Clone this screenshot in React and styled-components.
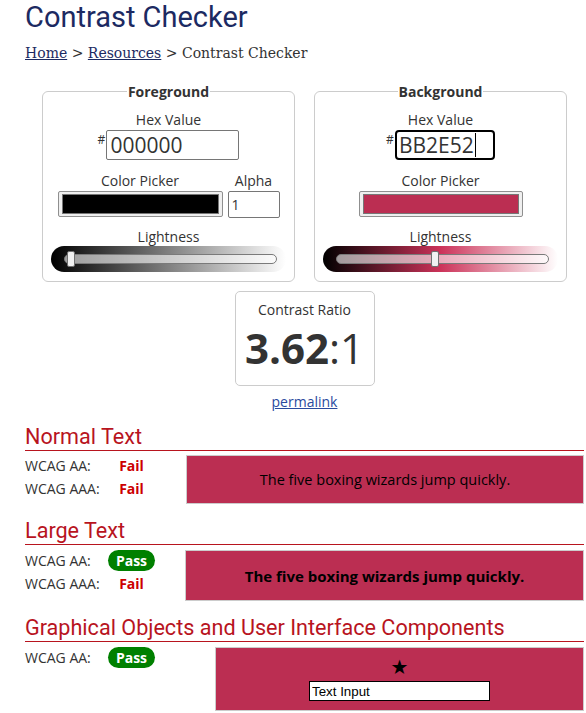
import React from "react";
import styled, { createGlobalStyle, css } from "styled-components";

const GlobalStyle = createGlobalStyle`
  html, body { margin: 0; padding: 0; background: #fff; }
  body {
    font-family: "Open Sans", "Noto Sans", sans-serif;
    color: #333;
    font-size: 14px;
    overflow: hidden;
  }
`;

const Page = styled.main`
  padding: 0 2px 0 25px;
`;

const Title = styled.h1`
  margin: 0;
  font-family: Roboto, "Liberation Sans", sans-serif;
  font-weight: 400;
  font-size: 29px;
  line-height: 35px;
  color: #1c2a62;
`;

const Breadcrumb = styled.nav`
  margin-top: 8px;
  font-family: "DejaVu Serif", "Liberation Serif", serif;
  font-size: 14px;
  line-height: 20px;
  color: #333;
`;

const Crumb = styled.a`
  color: #1c2a62;
  text-decoration: underline;
`;

const PickerRow = styled.div`
  display: flex;
  justify-content: center;
  gap: 19px;
  margin-top: 19px;
`;

const Panel = styled.fieldset`
  box-sizing: border-box;
  width: 253px;
  margin: 0;
  padding: 9px 8px 9px;
  border: 1px solid #ccc;
  border-radius: 6px;
  display: flex;
  flex-direction: column;
  align-items: center;
  min-width: 0;
`;

const Legend = styled.legend`
  margin: 0 auto;
  padding: 0 1px;
  font-weight: 700;
  font-size: 14px;
  line-height: 19px;
  color: #333;
`;

const FieldLabel = styled.label`
  display: block;
  font-size: 14px;
  line-height: ${(p) => p.$lh || 20}px;
  text-align: center;
  color: #333;
  margin-top: ${(p) => p.$mt || 0}px;
`;

const HexRow = styled.div`
  display: flex;
  align-items: flex-start;
`;

const Hash = styled.span`
  font-size: 12px;
  line-height: 12px;
  margin-top: 4px;
  margin-right: 1px;
  color: #333;
`;

const HexBox = styled.div`
  box-sizing: border-box;
  width: ${(p) => p.$w}px;
  height: 30px;
  padding-left: 3px;
  display: flex;
  align-items: center;
  font-size: 21px;
  color: #333;
  background: #fff;
  ${(p) =>
    p.$focused
      ? css`
          border: 2px solid #000;
          border-radius: 4px;
          padding-left: 2px;
        `
      : css`
          border: 1px solid #767676;
          border-radius: 2px;
        `}
`;

const Caret = styled.span`
  display: inline-block;
  width: 1px;
  height: 24px;
  margin-left: 1px;
  background: #000;
`;

const SwatchRow = styled.div`
  display: flex;
  gap: 5px;
  margin-top: 11px;
`;

const SwatchCol = styled.div`
  display: flex;
  flex-direction: column;
  align-items: center;
`;

const Swatch = styled.div`
  box-sizing: border-box;
  width: ${(p) => p.$w}px;
  height: 26px;
  padding: 2px 3px;
  border: 1px solid #8f8f8f;
  border-radius: 2px;
  background: #efefef;
`;

const SwatchFill = styled.div`
  width: 100%;
  height: 100%;
  box-sizing: border-box;
  border: 1px solid #777;
  background: ${(p) => p.$color};
`;

const AlphaBox = styled.div`
  box-sizing: border-box;
  width: 52px;
  height: 27px;
  border: 1px solid #767676;
  border-radius: 2px;
  padding-left: 3px;
  display: flex;
  align-items: center;
  font-size: 14px;
  color: #333;
`;

const LightnessBar = styled.div`
  box-sizing: border-box;
  width: 235px;
  height: 26px;
  border-radius: 13px;
  padding: 0 9px 0 13px;
  display: flex;
  align-items: center;
  background: ${(p) => p.$gradient};
`;

const Track = styled.div`
  position: relative;
  flex: 1;
  height: 10px;
  box-sizing: border-box;
  border: 1px solid #7a7a7a;
  border-radius: 5px;
  background: rgba(255, 255, 255, 0.6);
`;

const Thumb = styled.div`
  position: absolute;
  top: 50%;
  width: 8px;
  height: 16px;
  box-sizing: border-box;
  transform: translateY(-50%);
  border: 1px solid #6f6f6f;
  border-radius: 2px;
  background: #f1f1f1;
`;

const ContrastBox = styled.div`
  box-sizing: border-box;
  width: 140px;
  margin: 9px auto 0;
  padding: 9px 0 8px;
  border: 1px solid #ccc;
  border-radius: 5px;
  text-align: center;
`;

const RatioLabel = styled.div`
  font-size: 14px;
  line-height: 18px;
  color: #333;
`;

const RatioValue = styled.div`
  font-size: 42px;
  line-height: 58px;
  color: #333;
  font-weight: 400;
`;

const RatioStrong = styled.span`
  font-weight: 700;
`;

const Permalink = styled.a`
  display: block;
  width: max-content;
  margin: 6px auto 0;
  font-size: 14px;
  line-height: 20px;
  color: #2a4a9e;
  text-decoration: underline;
`;

const SectionTitle = styled.h2`
  margin: ${(p) => p.$mt}px 0 0;
  font-family: Roboto, "Liberation Sans", sans-serif;
  font-weight: 400;
  font-size: 21.6px;
  line-height: 26px;
  color: #b8141e;
  border-bottom: 1px solid #b8141e;
`;

const ResultRow = styled.div`
  display: flex;
  align-items: flex-start;
  margin-top: ${(p) => p.$mt}px;
`;

const ResultTable = styled.div`
  width: ${(p) => p.$w}px;
  flex: none;
  display: grid;
  grid-template-columns: 78px 57px;
  grid-auto-rows: 23px;
  align-items: center;
  margin-top: -1px;
`;

const RowLabel = styled.span`
  font-size: 14px;
  line-height: 23px;
  color: #333;
`;

const Verdict = styled.span`
  justify-self: center;
  font-size: 14px;
  font-weight: 700;
  ${(p) =>
    p.$pass
      ? css`
          color: #fff;
          background: #008000;
          border-radius: 11px;
          padding: 0 8px;
          line-height: 21px;
        `
      : css`
          color: #cc0000;
          line-height: 23px;
        `}
`;

const SampleBox = styled.div`
  flex: 1;
  box-sizing: border-box;
  height: ${(p) => p.$h}px;
  border: 1px solid #ccc;
  background: #bb2e52;
  display: flex;
  flex-direction: column;
  align-items: center;
  justify-content: center;
  color: #000;
  font-size: ${(p) => (p.$large ? 15 : 14.5)}px;
  font-weight: ${(p) => (p.$large ? 700 : 400)};
`;

const Star = styled.span`
  font-family: "DejaVu Sans", sans-serif;
  font-size: 20px;
  line-height: 20px;
  color: #000;
`;

const TextInput = styled.input`
  box-sizing: border-box;
  width: 181px;
  height: 20px;
  margin-top: 4px;
  padding: 0 2px;
  border: 1px solid #000;
  background: #fff;
  color: #000;
  font-family: "Liberation Sans", Arial, sans-serif;
  font-size: 13.33px;
  outline: none;
`;

function thumbLeft(l) {
  return 2 + l * 201;
}

function Lightness({ gradient, value }) {
  return (
    <LightnessBar $gradient={gradient}>
      <Track>
        <Thumb style={{ left: thumbLeft(value) }} />
      </Track>
    </LightnessBar>
  );
}

export default function App() {
  return (
    <>
      <GlobalStyle />
      <Page>
        <Title>Contrast Checker</Title>
        <Breadcrumb>
          <Crumb href="#">Home</Crumb> &gt; <Crumb href="#">Resources</Crumb> &gt; Contrast Checker
        </Breadcrumb>

        <PickerRow>
          <Panel>
            <Legend>Foreground</Legend>
            <FieldLabel>Hex Value</FieldLabel>
            <HexRow>
              <Hash>#</Hash>
              <HexBox $w={133}>000000</HexBox>
            </HexRow>
            <SwatchRow>
              <SwatchCol>
                <FieldLabel>Color Picker</FieldLabel>
                <Swatch $w={165}>
                  <SwatchFill $color="#000000" />
                </Swatch>
              </SwatchCol>
              <SwatchCol>
                <FieldLabel>Alpha</FieldLabel>
                <AlphaBox>1</AlphaBox>
              </SwatchCol>
            </SwatchRow>
            <FieldLabel $mt={9} $lh={19}>Lightness</FieldLabel>
            <Lightness gradient="linear-gradient(to right, #000 0%, #808080 50%, #fff 100%)" value={0} />
          </Panel>

          <Panel>
            <Legend>Background</Legend>
            <FieldLabel>Hex Value</FieldLabel>
            <HexRow>
              <Hash>#</Hash>
              <HexBox $w={100} $focused>
                BB2E52
                <Caret />
              </HexBox>
            </HexRow>
            <SwatchRow>
              <SwatchCol>
                <FieldLabel>Color Picker</FieldLabel>
                <Swatch $w={164}>
                  <SwatchFill $color="#bb2e52" />
                </Swatch>
              </SwatchCol>
            </SwatchRow>
            <FieldLabel $mt={10} $lh={19}>Lightness</FieldLabel>
            <Lightness
              gradient="linear-gradient(to right, hsl(345,60%,0%) 0%, hsl(345,60%,50%) 50%, hsl(345,60%,100%) 100%)"
              value={0.457}
            />
          </Panel>
        </PickerRow>

        <ContrastBox>
          <RatioLabel>Contrast Ratio</RatioLabel>
          <RatioValue>
            <RatioStrong>3.62</RatioStrong>:1
          </RatioValue>
        </ContrastBox>
        <Permalink href="#">permalink</Permalink>

        <SectionTitle $mt={12}>Normal Text</SectionTitle>
        <ResultRow $mt={4}>
          <ResultTable $w={161}>
            <RowLabel>WCAG AA:</RowLabel>
            <Verdict>Fail</Verdict>
            <RowLabel>WCAG AAA:</RowLabel>
            <Verdict>Fail</Verdict>
          </ResultTable>
          <SampleBox $h={49}>The five boxing wizards jump quickly.</SampleBox>
        </ResultRow>

        <SectionTitle $mt={14}>Large Text</SectionTitle>
        <ResultRow $mt={5}>
          <ResultTable $w={160}>
            <RowLabel>WCAG AA:</RowLabel>
            <Verdict $pass>Pass</Verdict>
            <RowLabel>WCAG AAA:</RowLabel>
            <Verdict>Fail</Verdict>
          </ResultTable>
          <SampleBox $h={51} $large>The five boxing wizards jump quickly.</SampleBox>
        </ResultRow>

        <SectionTitle $mt={14}>Graphical Objects and User Interface Components</SectionTitle>
        <ResultRow $mt={5}>
          <ResultTable $w={190}>
            <RowLabel>WCAG AA:</RowLabel>
            <Verdict $pass>Pass</Verdict>
          </ResultTable>
          <SampleBox $h={64}>
            <Star>★</Star>
            <TextInput defaultValue="Text Input" readOnly />
          </SampleBox>
        </ResultRow>
      </Page>
    </>
  );
}
